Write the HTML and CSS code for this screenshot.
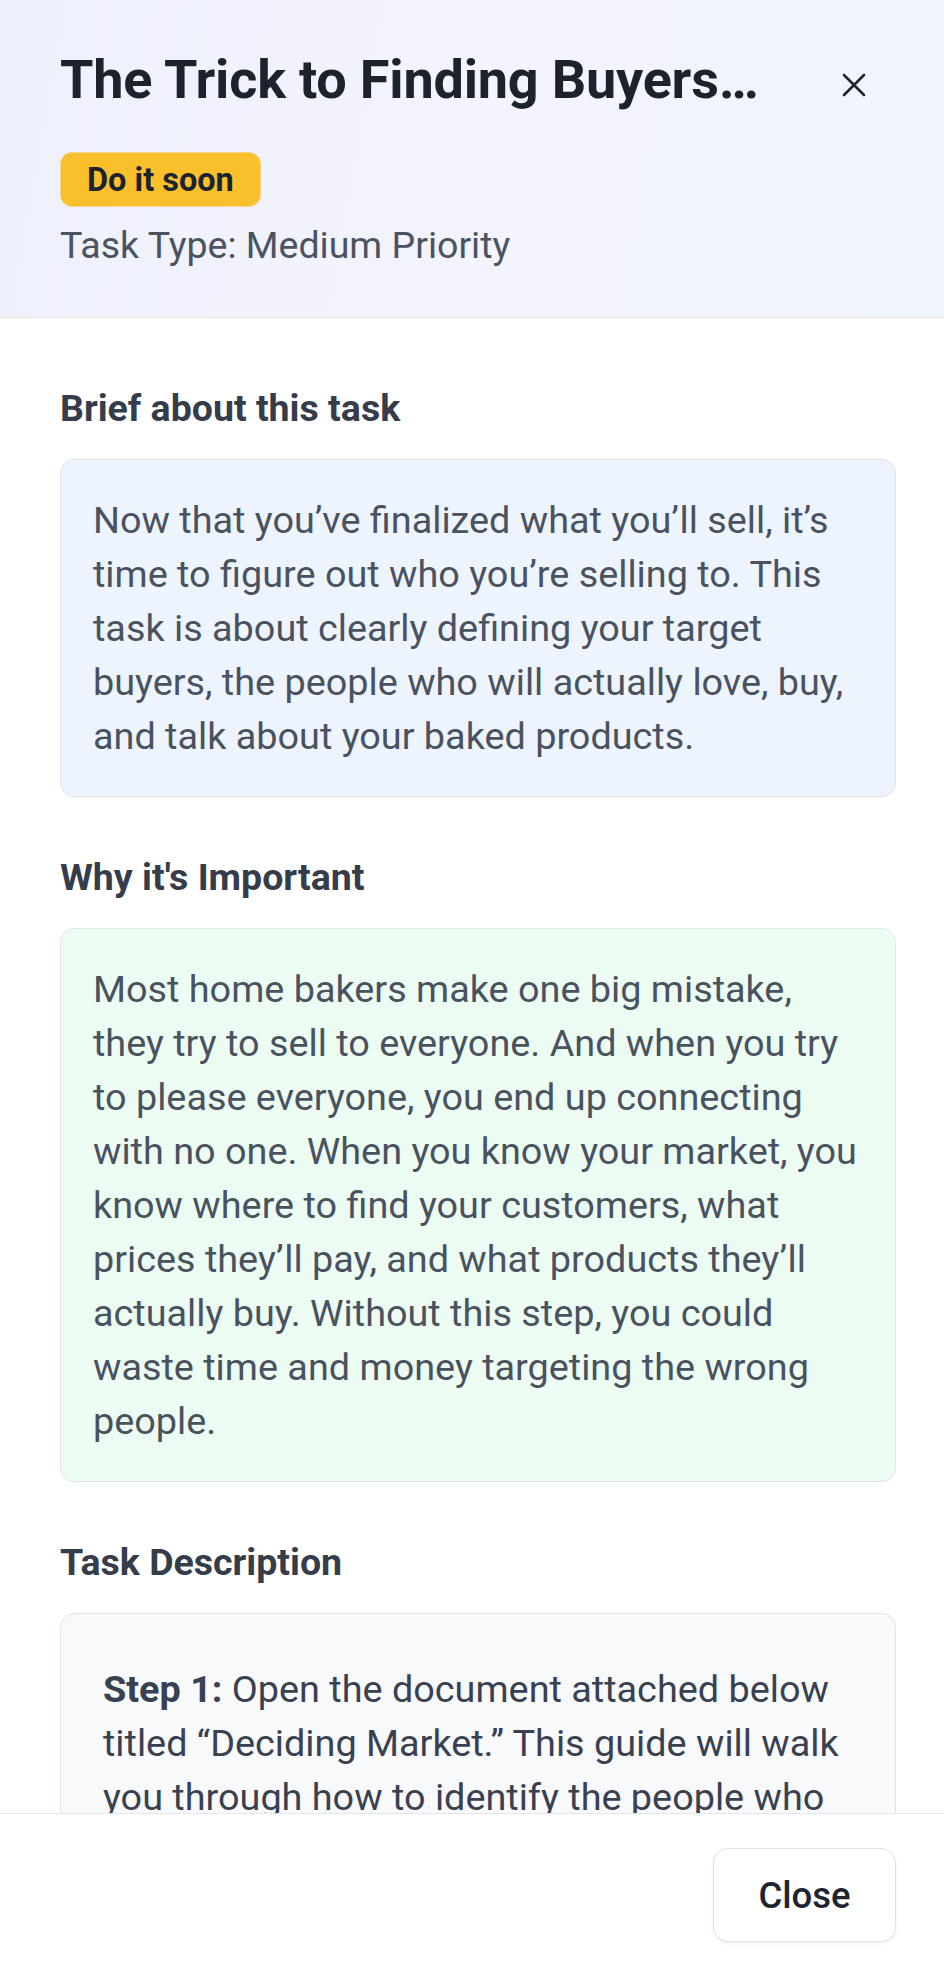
FILE: index.html
```html
<!DOCTYPE html>
<html lang="en">
<head>
<meta charset="utf-8">
<title>Task details</title>
<link rel="stylesheet" href="styles.css">
</head>
<body>
<div class="modal">
  <header class="modal-header">
    <div class="header-row">
      <h1 class="title">The Trick to Finding Buyers…</h1>
      <button class="icon-btn" aria-label="Close">
        <svg viewBox="0 0 24 24" width="24" height="24" aria-hidden="true">
          <path d="M2 2 L22 22 M22 2 L2 22" fill="none" stroke="currentColor" stroke-width="2.6" stroke-linecap="round"/>
        </svg>
      </button>
    </div>
    <span class="badge">Do it soon</span>
    <p class="task-type">Task Type: Medium Priority</p>
  </header>

  <main class="modal-body">
    <section class="section">
      <h2 class="section-title">Brief about this task</h2>
      <div class="card card-blue">
        <p>Now that you’ve finalized what you’ll sell, it’s time to figure out who you’re selling to. This task is about clearly defining your target buyers, the people who will actually love, buy, and talk about your baked products.</p>
      </div>
    </section>

    <section class="section">
      <h2 class="section-title">Why it's Important</h2>
      <div class="card card-green">
        <p>Most home bakers make one big mistake, they try to sell to everyone. And when you try to please everyone, you end up connecting with no one. When you know your market, you know where to find your customers, what prices they’ll pay, and what products they’ll actually buy. Without this step, you could waste time and money targeting the wrong people.</p>
      </div>
    </section>

    <section class="section">
      <h2 class="section-title">Task Description</h2>
      <div class="card card-gray">
        <div class="rich">
          <p><strong>Step 1:</strong> Open the document attached below titled “Deciding Market.” This guide will walk you through how to identify the people who are most likely to buy from you and what they care about most.</p>
        </div>
      </div>
    </section>
  </main>

  <footer class="modal-footer">
    <button class="btn-close">Close</button>
  </footer>
</div>
</body>
</html>
```

FILE: styles.css
```css
* {
  box-sizing: border-box;
}

html, body {
  margin: 0;
  padding: 0;
  background: #ffffff;
}

body {
  font-family: Roboto, "Noto Sans", "Liberation Sans", sans-serif;
  color: #1f2937;
}

.modal {
  width: 944px;
  height: 1966px;
  display: flex;
  flex-direction: column;
  background: #ffffff;
  overflow: hidden;
}

/* Header */
.modal-header {
  flex: 0 0 auto;
  padding: 47px 48px 46px 60px;
  background: linear-gradient(100deg, #eef0fb 0%, #f3f4fd 55%, #f1f5fe 100%);
  border-bottom: 1.5px solid #e3e6ea;
}

.header-row {
  display: flex;
  align-items: flex-start;
  justify-content: space-between;
}

.title {
  margin: 0;
  font-size: 54px;
  line-height: 65px;
  font-weight: 700;
  color: #1e222d;
  white-space: nowrap;
  overflow: hidden;
  text-overflow: ellipsis;
  letter-spacing: -0.2px;
}

.icon-btn {
  flex: 0 0 auto;
  width: 48px;
  height: 48px;
  margin: 14px 18px 0 20px;
  padding: 0;
  border: 0;
  background: transparent;
  color: #1f2430;
  display: flex;
  align-items: center;
  justify-content: center;
}

.badge {
  display: inline-flex;
  align-items: center;
  height: 55px;
  margin-top: 40px;
  padding: 0 26px;
  border-radius: 12px;
  background: #f9c02c;
  border: 1.5px solid #f6d58a;
  font-size: 32.5px;
  font-weight: 700;
  color: #1c2330;
}

.task-type {
  margin: 11.5px 0 0;
  font-size: 37.5px;
  line-height: 52px;
  color: #4b5360;
}

/* Body */
.modal-body {
  flex: 1 1 auto;
  overflow: hidden;
  padding: 69px 48px 0 60px;
}

.section + .section {
  margin-top: 59px;
}

.section-title {
  margin: 0 0 29px;
  font-size: 37.5px;
  line-height: 43px;
  font-weight: 700;
  color: #363d4a;
}

.card {
  border: 1.5px solid #e0e5e9;
  border-radius: 14px;
  padding: 33px 32px;
}

.card p {
  margin: 0;
  font-size: 37.8px;
  line-height: 54px;
  color: #4a5260;
}

.card-blue {
  background: #eef4fe;
}

.card-green {
  background: #edfcf3;
}

.card-gray {
  background: #f8f9fb;
}

.rich {
  padding: 15px 10px;
}

.card-gray p {
  color: #394150;
}

.card-gray strong {
  font-weight: 700;
  color: #374151;
}

/* Footer */
.modal-footer {
  flex: 0 0 153px;
  display: flex;
  justify-content: flex-end;
  align-items: flex-start;
  padding: 34px 48px 24px 60px;
  background: #ffffff;
  border-top: 1.5px solid #e5e7eb;
}

.btn-close {
  width: 183px;
  height: 94px;
  border: 1.5px solid #dde2e7;
  border-radius: 15px;
  background: #ffffff;
  box-shadow: 0 2px 4px rgba(15, 23, 42, 0.06);
  font-family: Roboto, "Noto Sans", "Liberation Sans", sans-serif;
  font-size: 36.5px;
  font-weight: 500;
  color: #1f2430;
}
```
